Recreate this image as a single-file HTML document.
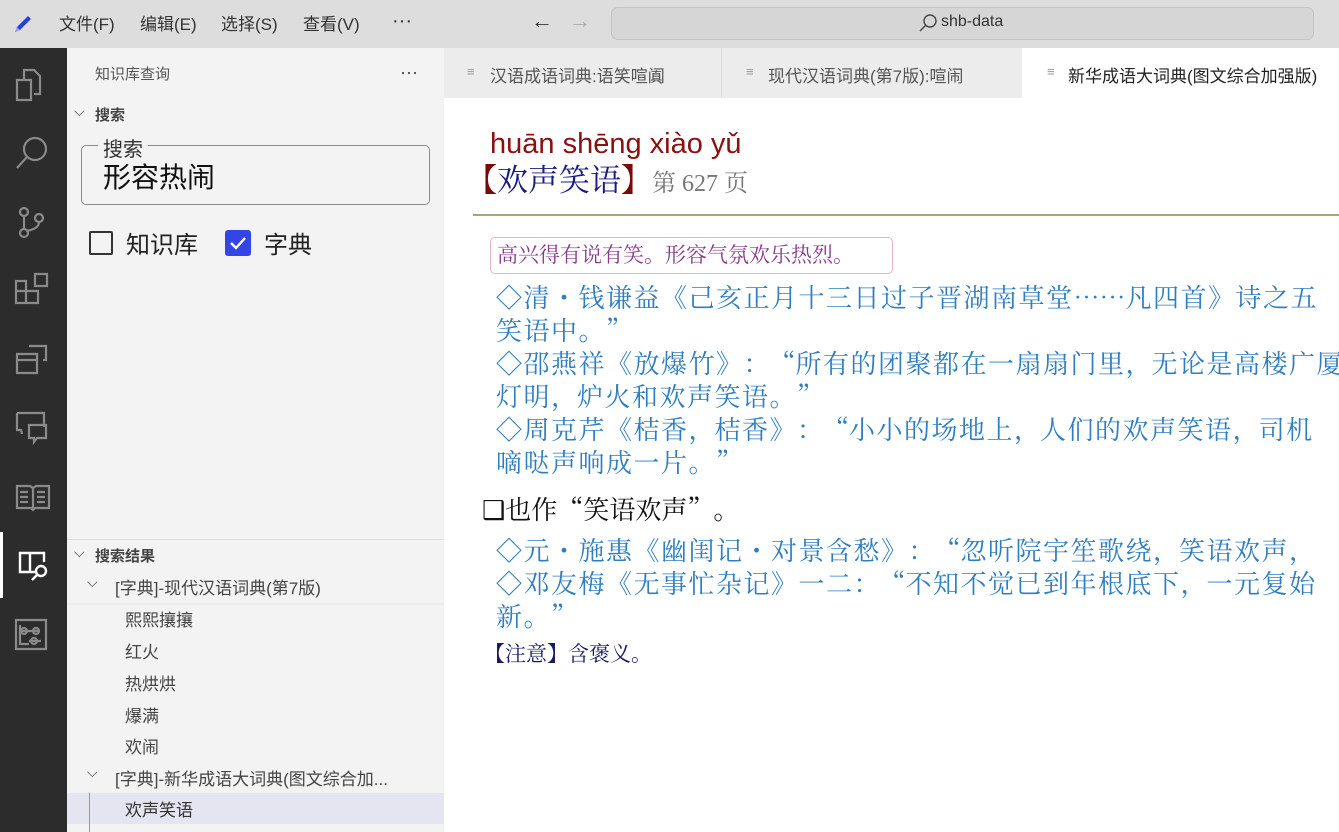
<!DOCTYPE html>
<html lang="zh-CN"><head><meta charset="utf-8">
<style>
*{margin:0;padding:0;box-sizing:border-box}
body{width:1339px;height:832px;overflow:hidden;position:relative;background:#fff;font-family:"Liberation Sans","Noto Sans CJK SC",sans-serif}
.abs{position:absolute;white-space:nowrap}
#title{left:0;top:0;width:1339px;height:48px;background:#dddddd}
#act{left:0;top:48px;width:67px;height:784px;background:#2c2c2c}
#side{left:67px;top:48px;width:377px;height:784px;background:#f3f3f3}
#tabs{left:444px;top:48px;width:895px;height:50px;background:#ececec}
#ed{left:444px;top:98px;width:895px;height:734px;background:#fff;overflow:hidden}
.menu{top:10px;font-size:17px;color:#333}
.ser{font-family:"Noto Serif CJK SC","Liberation Serif",serif}
.bl{color:#2f7ec0;font-size:26px;line-height:33px;letter-spacing:1.5px}
.tree{font-size:17px;color:#444}
.p{display:inline-block;width:1em;text-align:left}
.o{display:inline-block;width:1em;text-align:right}
.c{display:inline-block;width:1em;text-align:center}
</style></head><body>
<div id="title" class="abs"></div>
<svg class="abs" style="left:12px;top:13px" width="22" height="22" viewBox="0 0 22 22"><path d="M3 19 L5 14 L16 3 L19 6 L8 17 Z" fill="#2b3fd6"/><path d="M3 19 L5 14 L8 17Z" fill="#8ea0f0"/></svg>
<div class="abs menu" style="left:59px">文件(F)</div>
<div class="abs menu" style="left:140px">编辑(E)</div>
<div class="abs menu" style="left:221px">选择(S)</div>
<div class="abs menu" style="left:303px">查看(V)</div>
<div class="abs menu" style="left:392px;top:10px;font-size:20px">···</div>
<div class="abs" style="left:531px;top:8px;font-size:22px;color:#333">←</div>
<div class="abs" style="left:569px;top:8px;font-size:22px;color:#aaa">→</div>
<div class="abs" style="left:611px;top:7px;width:703px;height:33px;border:1px solid #c4c4c4;border-radius:7px;background:#d6d6d6"></div>
<svg class="abs" style="left:918px;top:13px" width="20" height="20" viewBox="0 0 20 20"><circle cx="12" cy="8" r="6" fill="none" stroke="#444" stroke-width="1.4"/><path d="M7.5 12.5 L2 18" stroke="#444" stroke-width="1.4"/></svg>
<div class="abs" style="left:941px;top:13px;font-size:16px;color:#333">shb-data</div>

<div id="act" class="abs"></div>
<div class="abs" style="left:0;top:532px;width:3px;height:66px;background:#fff"></div>
<svg class="abs" style="left:0;top:48px" width="67" height="784" viewBox="0 48 67 784" fill="none" stroke="#8a8a8a" stroke-width="2.2">
<path d="M24 80 V70 h10 l6 6 v18 h-6 M17 80 h14 v20 h-14 Z"/>
<circle cx="35" cy="149" r="11"/><path d="M27 157 L17 168"/>
<circle cx="24" cy="212" r="4"/><circle cx="24" cy="233" r="4"/><circle cx="39" cy="218" r="4"/><path d="M24 216 v13 M39 222 q0 7 -13 9"/>
<path d="M16 281 h10 v10 h-10 z M16 291 h10 v12 h-10 z M26 291 h12 v12 h-12 z M35 274 h12 v12 h-12 z"/>
<path d="M17 354 h20 v19 h-20 z M17 360 h20 M29 346 h17 v14 h-3"/>
<path d="M17 413 h27 v14 M17 413 v17 h4 l1 4 M29 425 h17 v13 h-9 l-3 4 v-4 h-5 z"/>
<path d="M17 486 h13 l3 2 l3-2 h13 v22 h-14 l-2 2 l-2-2 h-14 z M33 488 v20 M20 492 h8 M20 497 h8 M20 502 h8 M37 492 h8 M37 497 h8 M37 502 h8"/>
<path d="M16 620 h30 v29 h-30 z M20 625 v19 h9 M22 631 h18 M29 641 h12"/><circle cx="24" cy="631" r="3"/><circle cx="36" cy="631" r="3"/><circle cx="34" cy="641" r="3"/>
</svg>
<svg class="abs" style="left:17px;top:550px" width="34" height="34" viewBox="0 0 34 34" fill="none" stroke="#fff" stroke-width="2.4"><path d="M20 22 H3 V3 H27 V12 M13 3 V22"/><circle cx="24" cy="21" r="5"/><path d="M20 25 L15 30"/></svg>

<div id="side" class="abs"></div>
<div class="abs" style="left:95px;top:63px;font-size:15px;color:#555">知识库查询</div>
<div class="abs" style="left:400px;top:62px;font-size:18px;color:#444">···</div>
<div class="abs" style="left:74px;top:103px;font-size:14px;color:#444">⌵</div>
<div class="abs" style="left:95px;top:104px;font-size:15px;font-weight:bold;color:#444">搜索</div>
<div class="abs" style="left:81px;top:145px;width:349px;height:60px;border:1px solid #8a8a8a;border-radius:5px"></div>
<div class="abs" style="left:98px;top:137px;background:#f3f3f3;padding:0 5px;font-size:20px;color:#333;line-height:26px">搜索</div>
<div class="abs" style="left:103px;top:156px;font-size:28px;color:#111">形容热闹</div>
<div class="abs" style="left:89px;top:231px;width:24px;height:24px;border:2px solid #333;border-radius:2px"></div>
<div class="abs" style="left:126px;top:225px;font-size:24px;color:#222">知识库</div>
<div class="abs" style="left:225px;top:230px;width:26px;height:26px;background:#3445e5;border-radius:3px"></div>
<svg class="abs" style="left:225px;top:230px" width="26" height="26"><path d="M6 13 L11 18 L20 8" fill="none" stroke="#fff" stroke-width="2.4"/></svg>
<div class="abs" style="left:264px;top:225px;font-size:24px;color:#222">字典</div>
<div class="abs" style="left:67px;top:539px;width:377px;height:1px;background:#ddd"></div>
<div class="abs" style="left:74px;top:544px;font-size:14px;color:#444">⌵</div>
<div class="abs" style="left:95px;top:545px;font-size:15px;font-weight:bold;color:#444">搜索结果</div>
<div class="abs tree" style="left:87px;top:574px;font-size:14px">⌵</div>
<div class="abs tree" style="left:115px;top:574px">[字典]-现代汉语词典(第7版)</div>
<div class="abs" style="left:67px;top:603px;width:377px;height:2px;background:#ebebeb"></div>
<div class="abs tree" style="left:125px;top:606px">熙熙攘攘</div>
<div class="abs tree" style="left:125px;top:638px">红火</div>
<div class="abs tree" style="left:125px;top:670px">热烘烘</div>
<div class="abs tree" style="left:125px;top:702px">爆满</div>
<div class="abs tree" style="left:125px;top:733px">欢闹</div>
<div class="abs tree" style="left:87px;top:764px;font-size:14px">⌵</div>
<div class="abs tree" style="left:115px;top:765px">[字典]-新华成语大词典(图文综合加...</div>
<div class="abs" style="left:67px;top:793px;width:377px;height:31px;background:#e4e5f1"></div>
<div class="abs" style="left:89px;top:793px;width:1px;height:39px;background:#999"></div>
<div class="abs tree" style="left:125px;top:796px;color:#333">欢声笑语</div>

<div id="tabs" class="abs"></div>
<div class="abs" style="left:721px;top:48px;width:1px;height:50px;background:#ddd"></div>
<div class="abs" style="left:1022px;top:48px;width:317px;height:50px;background:#fff"></div>
<div class="abs" style="left:467px;top:64px;font-size:13px;color:#999">≡</div>
<div class="abs" style="left:490px;top:62px;font-size:17px;color:#555">汉语成语词典:语笑喧阗</div>
<div class="abs" style="left:746px;top:64px;font-size:13px;color:#999">≡</div>
<div class="abs" style="left:768px;top:62px;font-size:17px;color:#555">现代汉语词典(第7版):喧闹</div>
<div class="abs" style="left:1047px;top:64px;font-size:13px;color:#999">≡</div>
<div class="abs" style="left:1068px;top:62px;font-size:17px;color:#222">新华成语大词典(图文综合加强版)</div>

<div id="ed" class="abs">
<div class="abs" style="left:46px;top:30px;font-size:29px;color:#8b1010">huān shēng xiào yǔ</div>
<div class="abs ser" style="left:22px;top:58px;font-size:31px;line-height:44px;color:#1a1a80"><span style="color:#7a0a0a;font-weight:bold">【</span>欢声笑语<span style="color:#7a0a0a;font-weight:bold">】</span><span style="font-size:24px;color:#777;font-family:'Liberation Serif','Noto Serif CJK SC',serif">第 627 页</span></div>
<div class="abs" style="left:29px;top:116px;width:870px;height:2px;background:#b0a080"></div>
<div class="abs ser" style="left:46px;top:139px;width:403px;height:37px;border:1px solid #e3b6c6;border-radius:5px;font-size:21px;line-height:30px;color:#8a3a8a;padding:1px 0 0 6px">高兴得有说有笑。形容气氛欢乐热烈。</div>
<div class="abs ser bl" style="left:52px;top:182px">◇清・钱谦益《己亥正月十三日过子晋湖南草堂<span class="c">…</span><span class="c">…</span>凡四首》诗之五</div>
<div class="abs ser bl" style="left:52px;top:215px">笑语中。<span class="p">”</span></div>
<div class="abs ser bl" style="left:52px;top:248px">◇邵燕祥《放爆竹》<span class="p">：</span><span class="o">“</span>所有的团聚都在一扇扇门里<span class="p">，</span>无论是高楼广厦</div>
<div class="abs ser bl" style="left:52px;top:281px">灯明<span class="p">，</span>炉火和欢声笑语。<span class="p">”</span></div>
<div class="abs ser bl" style="left:52px;top:314px">◇周克芹《桔香<span class="p">，</span>桔香》<span class="p">：</span><span class="o">“</span>小小的场地上<span class="p">，</span>人们的欢声笑语<span class="p">，</span>司机</div>
<div class="abs ser bl" style="left:52px;top:347px">嘀哒声响成一片。<span class="p">”</span></div>
<div class="abs ser" style="left:38px;top:394px;font-size:26px;line-height:33px;color:#111">❑也作<span class="o">“</span>笑语欢声<span class="p">”</span>。</div>
<div class="abs ser bl" style="left:52px;top:435px">◇元・施惠《幽闺记・对景含愁》<span class="p">：</span><span class="o">“</span>忽听院宇笙歌绕<span class="p">，</span>笑语欢声<span class="p">，</span></div>
<div class="abs ser bl" style="left:52px;top:468px">◇邓友梅《无事忙杂记》一二<span class="p">：</span><span class="o">“</span>不知不觉已到年根底下<span class="p">，</span>一元复始</div>
<div class="abs ser bl" style="left:52px;top:501px">新。<span class="p">”</span></div>
<div class="abs ser" style="left:40px;top:541px;font-size:21px;line-height:28px;color:#1a1a60">【注意】含褒义。</div>
</div>
</body></html>
